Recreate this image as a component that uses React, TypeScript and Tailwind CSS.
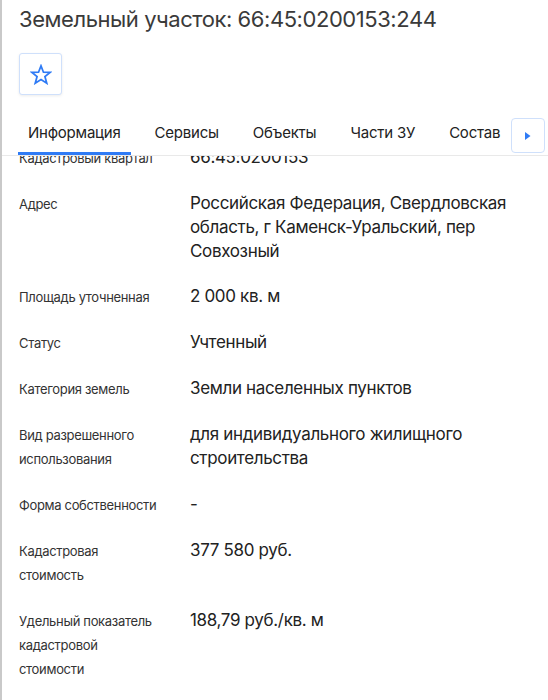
import React from "react";

const rows: { label: string; value: string }[] = [
  { label: "Кадастровый квартал", value: "66:45:0200153" },
  { label: "Адрес", value: "Российская Федерация, Свердловская область, г Каменск-Уральский, пер Совхозный" },
  { label: "Площадь уточненная", value: "2 000 кв. м" },
  { label: "Статус", value: "Учтенный" },
  { label: "Категория земель", value: "Земли населенных пунктов" },
  { label: "Вид разрешенного использования", value: "для индивидуального жилищного строительства" },
  { label: "Форма собственности", value: "-" },
  { label: "Кадастровая стоимость", value: "377 580 руб." },
  { label: "Удельный показатель кадастровой стоимости", value: "188,79 руб./кв. м" },
];

const tabs = ["Информация", "Сервисы", "Объекты", "Части ЗУ", "Состав"];

export default function App() {
  return (
    <div className="w-[548px] h-[700px] overflow-hidden bg-white border-l-2 border-[#c9c9c9] font-['Inter',sans-serif] text-[#333] flex flex-col">
      <h1 className="pl-[17px] pt-[3px] text-[22px] leading-[32px] tracking-[-0.02em] font-normal text-[#3a3a3a] whitespace-nowrap">
        Земельный участок: 66:45:0200153:244
      </h1>
      <div className="pl-[17px] mt-[18px]">
        <button className="w-[43px] h-[42px] flex items-center justify-center border border-[#cfe0fb] rounded-[3px] bg-white shadow-[0_1px_3px_rgba(0,0,0,0.08)]">
          <svg width="22" height="21" viewBox="0 0 24 23" fill="none">
            <polygon
              points="12,2 14.7,9 22,9.2 16.3,13.8 18.3,21 12,16.9 5.7,21 7.7,13.8 2,9.2 9.3,9"
              stroke="#2f7bf5"
              strokeWidth="1.9"
              strokeLinejoin="miter"
            />
          </svg>
        </button>
      </div>
      <div className="mt-[22px] flex items-start border-b border-[#e9e9e9] shrink-0">
        <div className="flex-1 min-w-0 overflow-hidden pl-[16px]">
          <div className="flex gap-[14px] whitespace-nowrap">
            {tabs.map((t, i) => (
              <div
                key={t}
                className={
                  "px-[10px] pt-[6px] pb-[9px] text-[15px] leading-[20px] tracking-[-0.015em] text-[#222] border-b-[3px] " +
                  (i === 0 ? "border-[#2f7bf5]" : "border-transparent")
                }
              >
                {t}
              </div>
            ))}
          </div>
        </div>
        <button className="mt-[1px] mx-[3px] w-[34px] h-[35px] shrink-0 flex items-center justify-center bg-white border border-[#cfe0fb] rounded-[4px]">
          <svg width="6" height="8" viewBox="0 0 6 8">
            <polygon points="0,0 5.5,4 0,8" fill="#2f7bf5" />
          </svg>
        </button>
      </div>
      <div className="flex-1 min-h-0 overflow-hidden">
        <div className="-mt-[21px] pl-[17px] pr-[19px]">
          {rows.map((r) => (
            <div key={r.label} className="grid grid-cols-[171px_1fr] py-[11px]">
              <div className="pr-[30px] text-[13px] leading-[24px] tracking-[-0.025em] text-[#333]">{r.label}</div>
              <div className="text-[17px] leading-[24px] tracking-[-0.02em] text-[#222] -mt-[1px]">{r.value}</div>
            </div>
          ))}
        </div>
      </div>
    </div>
  );
}
